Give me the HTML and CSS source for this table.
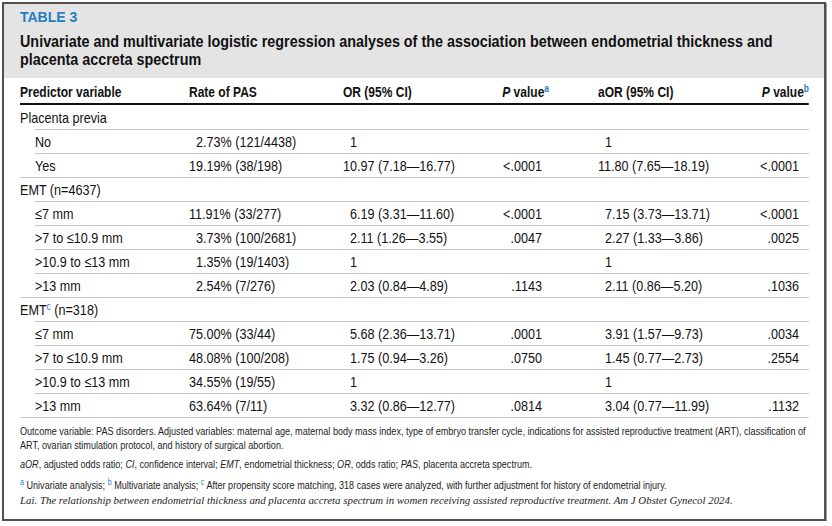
FILE: index.html
```html
<!DOCTYPE html>
<html lang="en">
<head>
<meta charset="utf-8">
<title>Table 3</title>
<link rel="stylesheet" href="styles.css">
</head>
<body>
<div class="frame">
  <div class="caption">
    <div class="label">TABLE 3</div>
    <div class="title narrow">Univariate and multivariate logistic regression analyses of the association between endometrial thickness and placenta accreta spectrum</div>
  </div>
  <div class="content">
    <div class="grid narrow">
      <div class="row head">
        <div>Predictor variable</div>
        <div>Rate of PAS</div>
        <div>OR (95% CI)</div>
        <div class="p1"><i>P</i> value<sup>a</sup></div>
        <div class="c5">aOR (95% CI)</div>
        <div class="p2"><i>P</i> value<sup>b</sup></div>
      </div>

      <div class="row grp first"><div>Placenta previa</div></div>
      <div class="row sub">
        <div>No</div><div>&#8199;2.73% (121/4438)</div><div>&#8199;1</div><div class="p1"></div><div class="c5">&#8199;1</div><div class="p2"></div>
      </div>
      <div class="row sub">
        <div>Yes</div><div>19.19% (38/198)</div><div>10.97 (7.18&#8212;16.77)</div><div class="p1">&lt;.0001</div><div class="c5">11.80 (7.65&#8212;18.19)</div><div class="p2">&lt;.0001</div>
      </div>

      <div class="row grp"><div>EMT (n=4637)</div></div>
      <div class="row sub">
        <div>&le;7 mm</div><div>11.91% (33/277)</div><div>&#8199;6.19 (3.31&#8212;11.60)</div><div class="p1">&lt;.0001</div><div class="c5">&#8199;7.15 (3.73&#8212;13.71)</div><div class="p2">&lt;.0001</div>
      </div>
      <div class="row sub">
        <div>&gt;7 to &le;10.9 mm</div><div>&#8199;3.73% (100/2681)</div><div>&#8199;2.11 (1.26&#8212;3.55)</div><div class="p1">.0047</div><div class="c5">&#8199;2.27 (1.33&#8212;3.86)</div><div class="p2">.0025</div>
      </div>
      <div class="row sub">
        <div>&gt;10.9 to &le;13 mm</div><div>&#8199;1.35% (19/1403)</div><div>&#8199;1</div><div class="p1"></div><div class="c5">&#8199;1</div><div class="p2"></div>
      </div>
      <div class="row sub">
        <div>&gt;13 mm</div><div>&#8199;2.54% (7/276)</div><div>&#8199;2.03 (0.84&#8212;4.89)</div><div class="p1">.1143</div><div class="c5">&#8199;2.11 (0.86&#8212;5.20)</div><div class="p2">.1036</div>
      </div>

      <div class="row grp"><div>EMT<sup>c</sup> (n=318)</div></div>
      <div class="row sub">
        <div>&le;7 mm</div><div>75.00% (33/44)</div><div>&#8199;5.68 (2.36&#8212;13.71)</div><div class="p1">.0001</div><div class="c5">&#8199;3.91 (1.57&#8212;9.73)</div><div class="p2">.0034</div>
      </div>
      <div class="row sub">
        <div>&gt;7 to &le;10.9 mm</div><div>48.08% (100/208)</div><div>&#8199;1.75 (0.94&#8212;3.26)</div><div class="p1">.0750</div><div class="c5">&#8199;1.45 (0.77&#8212;2.73)</div><div class="p2">.2554</div>
      </div>
      <div class="row sub">
        <div>&gt;10.9 to &le;13 mm</div><div>34.55% (19/55)</div><div>&#8199;1</div><div class="p1"></div><div class="c5">&#8199;1</div><div class="p2"></div>
      </div>
      <div class="row sub">
        <div>&gt;13 mm</div><div>63.64% (7/11)</div><div>&#8199;3.32 (0.86&#8212;12.77)</div><div class="p1">.0814</div><div class="c5">&#8199;3.04 (0.77&#8212;11.99)</div><div class="p2">.1132</div>
      </div>
    </div>

    <div class="notes">
      <p class="narrow note">Outcome variable: PAS disorders. Adjusted variables: maternal age, maternal body mass index, type of embryo transfer cycle, indications for assisted reproductive treatment (ART), classification of<br>ART, ovarian stimulation protocol, and history of surgical abortion.</p>
      <p class="narrow note abbr"><i>aOR</i>, adjusted odds ratio; <i>CI</i>, confidence interval; <i>EMT</i>, endometrial thickness; <i>OR</i>, odds ratio; <i>PAS</i>, placenta accreta spectrum.</p>
      <p class="narrow note fn"><sup>a</sup> Univariate analysis; <sup>b</sup> Multivariate analysis; <sup>c</sup> After propensity score matching, 318 cases were analyzed, with further adjustment for history of endometrial injury.</p>
      <p class="cite">Lai. The relationship between endometrial thickness and placenta accreta spectrum in women receiving assisted reproductive treatment. Am J Obstet Gynecol 2024.</p>
    </div>
  </div>
</div>
</body>
</html>
```

FILE: styles.css
```css
* { box-sizing: border-box; }
html, body { margin: 0; padding: 0; background: #fff; }
body {
  font-family: "Liberation Sans", Arial, sans-serif;
  color: #111;
}
/* Helvetica Condensed look: Arial metrics compressed horizontally */
.narrow {
  transform: scaleX(0.84);
  transform-origin: 0 0;
}
.frame {
  margin: 2px 0 0 2px;
  width: 824px;
  height: 519px;
  border: 2px solid #505050;
  box-shadow: 1px 1px 0 #9a9a9a;
  overflow: hidden;
}
.caption {
  background: #e4e4e4;
  padding: 6px 16px 0;
  height: 74px;
}
.label {
  color: #1f7fbf;
  font-weight: bold;
  font-size: 14px;
  line-height: 14px;
  margin-bottom: 9px;
}
.title {
  width: calc(788px / 0.84);
  font-weight: bold;
  font-size: 17.1px;
  line-height: 18px;
  color: #111;
}
.content {
  padding: 2px 15px 0 16px;
}
.grid {
  width: calc(789px / 0.84);
}
.row {
  display: grid;
  grid-template-columns: calc(169px / 0.84) calc(154px / 0.84) calc(137px / 0.84) calc(69px / 0.84) calc(180px / 0.84) calc(80px / 0.84);
  font-size: 15px;
  height: 24px;
  align-items: center;
  border-top: 1px solid #c9c9c9;
  white-space: nowrap;
}
.row.head {
  font-size: 14.3px;
  font-weight: bold;
  border-top: none;
  border-bottom: 2px solid #111;
  height: 25px;
}
.row.first { border-top: none; }
.row.sub {
  margin-left: calc(15px / 0.84);
  grid-template-columns: calc(154px / 0.84) calc(154px / 0.84) calc(137px / 0.84) calc(69px / 0.84) calc(180px / 0.84) calc(80px / 0.84);
}
.p1 { text-align: right; padding-right: calc(7px / 0.84); }
.p2 { text-align: right; padding-right: calc(10px / 0.84); }
.head .p1, .head .p2 { padding-right: 0; }
.c5 { padding-left: calc(49px / 0.84); }
sup {
  color: #1f7fbf;
  font-size: 10px;
  line-height: 0;
  vertical-align: 5px;
}
.notes {
  border-top: 1px solid #c9c9c9;
  padding-top: 6px;
}
.note {
  width: calc(789px / 0.84);
  margin: 0 0 5px;
  font-size: 10.8px;
  line-height: 14px;
  color: #222;
  white-space: nowrap;
}
.note.abbr { margin-bottom: 7px; }
.note.fn { margin-bottom: 1px; }
.note sup { font-size: 8.5px; vertical-align: 4px; }
.cite {
  margin: 0;
  font-family: "Liberation Serif", "Times New Roman", serif;
  font-style: italic;
  font-size: 10.85px;
  line-height: 14px;
  color: #222;
  white-space: nowrap;
}
```
